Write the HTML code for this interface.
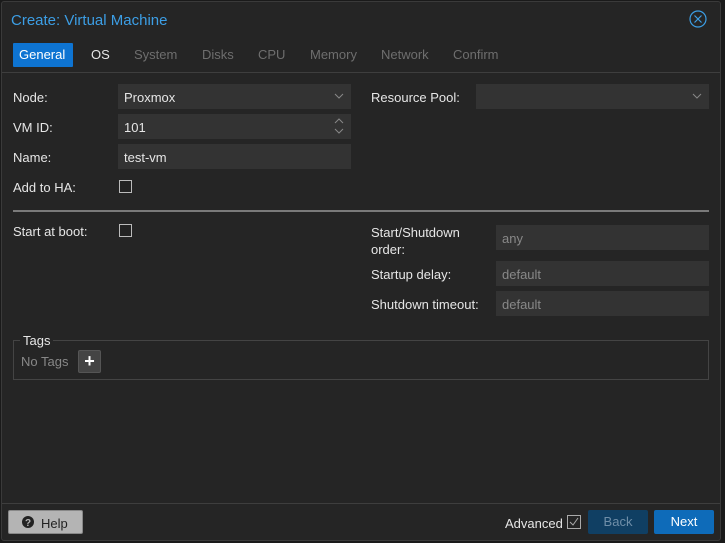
<!DOCTYPE html>
<html><head><style>
*{margin:0;padding:0;box-sizing:border-box}
body{width:725px;height:543px;background:#1a1a1a;font-family:"Liberation Sans",sans-serif;font-size:13px;color:#e0e0e0;position:relative;overflow:hidden}
.win{position:absolute;left:1px;top:1px;width:720px;height:540px;background:#252525;border:1px solid #3a3a3a;border-radius:3px}
.a{position:absolute}
.lbl{position:absolute;color:#e6e6e6;font-size:13px}
.inp{position:absolute;background:#333;height:25px;padding:6px 6px;font-size:13px;color:#e6e6e6}
.ph{color:#888}
.cb{position:absolute;width:13px;height:13px;border:1px solid #bbb;background:#222}
.tab{position:absolute;top:47px;font-size:13px;color:#6e6e6e}
</style></head><body>
<div class="win"></div>
<div class="a" style="left:11px;top:12px;font-size:15px;color:#3c9ee5">Create: Virtual Machine</div>
<svg class="a" style="left:689px;top:10px" width="18" height="18" viewBox="0 0 18 18"><circle cx="9" cy="9" r="8" fill="none" stroke="#3c9ee5" stroke-width="1.2"/><path d="M5.5 5.5L12.5 12.5M12.5 5.5L5.5 12.5" stroke="#3c9ee5" stroke-width="1.2"/></svg>
<div class="a" style="left:13px;top:43px;width:60px;height:24px;background:#0e74d2;border-radius:1px"></div>
<div class="tab" style="left:19px;color:#fff">General</div>
<div class="tab" style="left:91px;color:#e6e6e6">OS</div>
<div class="tab" style="left:134px">System</div>
<div class="tab" style="left:202px">Disks</div>
<div class="tab" style="left:258px">CPU</div>
<div class="tab" style="left:310px">Memory</div>
<div class="tab" style="left:381px">Network</div>
<div class="tab" style="left:453px">Confirm</div>
<div class="a" style="left:2px;top:72px;width:718px;height:1px;background:#3e3e3e"></div>

<div class="lbl" style="left:13px;top:90px">Node:</div>
<div class="inp" style="left:118px;top:84px;width:233px">Proxmox</div>
<svg class="a" style="left:334px;top:93px" width="10" height="6"><path d="M1 1L5 5L9 1" fill="none" stroke="#888"/></svg>
<div class="lbl" style="left:13px;top:120px">VM ID:</div>
<div class="inp" style="left:118px;top:114px;width:233px">101</div>
<svg class="a" style="left:334px;top:118px" width="10" height="16"><path d="M1 5L5 1L9 5M1 11L5 15L9 11" fill="none" stroke="#888"/></svg>
<div class="lbl" style="left:13px;top:150px">Name:</div>
<div class="inp" style="left:118px;top:144px;width:233px">test-vm</div>
<div class="lbl" style="left:13px;top:180px">Add to HA:</div>
<div class="cb" style="left:119px;top:180px"></div>
<div class="lbl" style="left:371px;top:90px">Resource Pool:</div>
<div class="inp" style="left:476px;top:84px;width:233px"></div>
<svg class="a" style="left:692px;top:93px" width="10" height="6"><path d="M1 1L5 5L9 1" fill="none" stroke="#888"/></svg>

<div class="a" style="left:13px;top:210px;width:696px;height:2px;background:#7a7a7a"></div>

<div class="lbl" style="left:13px;top:224px">Start at boot:</div>
<div class="cb" style="left:119px;top:224px"></div>
<div class="lbl" style="left:371px;top:224px;line-height:17px">Start/Shutdown<br>order:</div>
<div class="inp ph" style="left:496px;top:225px;width:213px">any</div>
<div class="lbl" style="left:371px;top:267px">Startup delay:</div>
<div class="inp ph" style="left:496px;top:261px;width:213px">default</div>
<div class="lbl" style="left:371px;top:297px">Shutdown timeout:</div>
<div class="inp ph" style="left:496px;top:291px;width:213px">default</div>

<div class="a" style="left:13px;top:340px;width:696px;height:40px;border:1px solid #444"></div>
<div class="a" style="left:20px;top:333px;background:#252525;padding:0 3px;color:#e6e6e6">Tags</div>
<div class="a" style="left:21px;top:354px;color:#888">No Tags</div>
<div class="a" style="left:78px;top:350px;width:23px;height:23px;background:#444;border:1px solid #555;border-radius:2px;color:#fff;font-weight:bold;font-size:18px;text-align:center;line-height:21px">+</div>

<div class="a" style="left:2px;top:503px;width:718px;height:1px;background:#3e3e3e"></div>
<div class="a" style="left:8px;top:510px;width:75px;height:24px;background:#b4b4b4;border:1px solid #888;border-radius:2px"></div>
<svg class="a" style="left:22px;top:516px" width="12" height="12"><circle cx="6" cy="6" r="6" fill="#222"/><text x="6" y="10" font-size="10" font-weight="bold" fill="#b4b4b4" text-anchor="middle" font-family="Liberation Sans">?</text></svg>
<div class="a" style="left:41px;top:516px;color:#222">Help</div>
<div class="a" style="left:505px;top:516px;color:#e6e6e6">Advanced</div>
<svg class="a" style="left:567px;top:515px" width="14" height="14"><rect x=".5" y=".5" width="13" height="13" fill="none" stroke="#aaa"/><path d="M3 7L6 10L11 3" fill="none" stroke="#aaa"/></svg>
<div class="a" style="left:588px;top:510px;width:60px;height:24px;background:#103f63;border-radius:2px;color:#6f8ea8;text-align:center;line-height:24px">Back</div>
<div class="a" style="left:654px;top:510px;width:60px;height:24px;background:#0e6bb9;border-radius:2px;color:#fff;text-align:center;line-height:24px">Next</div>
</body></html>
